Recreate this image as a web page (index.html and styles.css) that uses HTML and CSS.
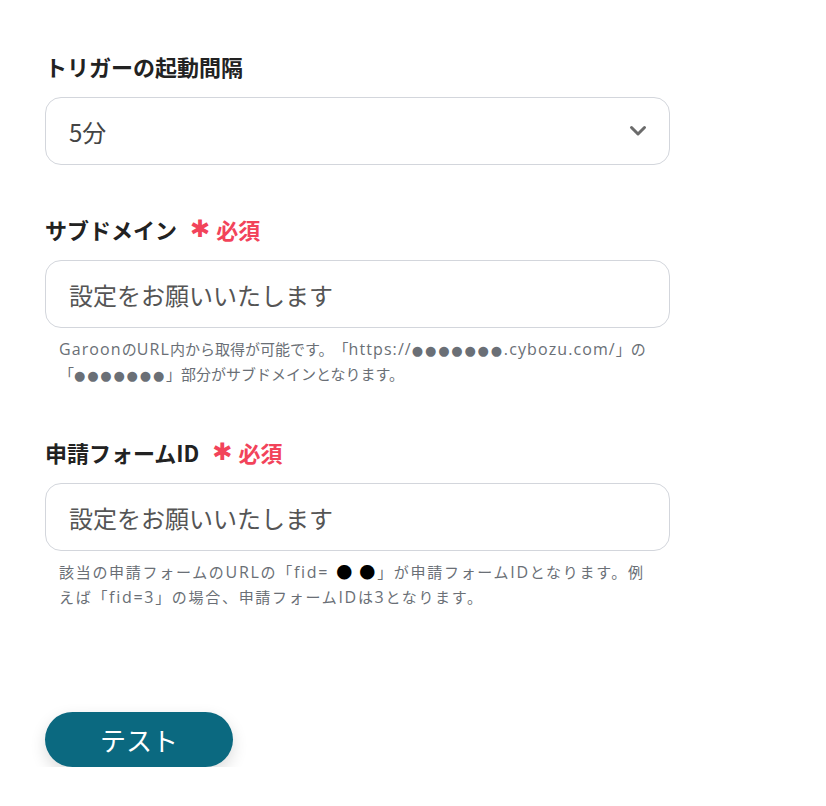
FILE: index.html
```html
<!DOCTYPE html>
<html lang="ja">
<head>
<meta charset="utf-8">
<link rel="stylesheet" href="styles.css">
</head>
<body>
<main class="form">
  <section class="field">
    <div class="label">トリガーの起動間隔</div>
    <div class="box select">
      <span class="value">5分</span>
      <svg class="chev" width="18" height="12" viewBox="0 0 18 12"><path d="M2.5 2.5 L9 9 L15.5 2.5" fill="none" stroke="#6b6b6b" stroke-width="3" stroke-linecap="round" stroke-linejoin="round"/></svg>
    </div>
  </section>
  <section class="field">
    <div class="label">サブドメイン<span class="req"><span class="ast">✱</span>必須</span></div>
    <div class="box"><span class="ph">設定をお願いいたします</span></div>
    <p class="help"><span class="lat">Garoon</span>の<span class="lat">URL</span>内から取得が可能です。「<span class="lat">https://<span class="dot">●●●●●●●</span>.cybozu.com/</span>」の「<span class="dot">●●●●●●●</span>」部分がサブドメインとなります。</p>
  </section>
  <section class="field">
    <div class="label">申請フォームID<span class="req"><span class="ast">✱</span>必須</span></div>
    <div class="box"><span class="ph">設定をお願いいたします</span></div>
    <p class="help help2">該当の申請フォームの<span class="lat">URL</span>の「<span class="lat">fid=</span><span class="big">●</span><span class="big last">●</span>」が申請フォーム<span class="lat">ID</span>となります。例<br>えば「<span class="lat">fid=3</span>」の場合、申請フォーム<span class="lat">ID</span>は<span class="lat">3</span>となります。</p>
  </section>
  <button class="test">テスト</button>
</main>
</body>
</html>
```
FILE: styles.css
```css
* { box-sizing: border-box; }
html, body { margin: 0; padding: 0; background: #fff; }
body {
  font-family: "Noto Sans CJK JP", "Noto Sans", sans-serif;
  color: #222;
  text-spacing-trim: space-all;
}
.form {
  width: 670px;
  padding: 51px 0 0 45px;
  display: flex;
  flex-direction: column;
}
.field { display: flex; flex-direction: column; width: 625px; }
.field:nth-child(1) { margin-bottom: 49px; }
.field:nth-child(2) { margin-bottom: 51px; }
.label {
  font-size: 22px;
  font-weight: 700;
  line-height: 30px;
  margin-bottom: 16px;
  color: #222;
  display: flex;
  align-items: center;
}
.req { color: #f2435a; margin-left: 13px; display: inline-flex; align-items: center; }
.ast {
  font-family: "DejaVu Sans", sans-serif;
  font-size: 24px;
  font-weight: 700;
  margin-right: 6px;
  line-height: 1;
}
.box {
  height: 68px;
  border: 1px solid #d3d6dc;
  border-radius: 16px;
  display: flex;
  align-items: center;
  padding: 0 23px;
  font-size: 24px;
}
.select { justify-content: space-between; padding-right: 22px; }
.value { color: #444; }
.ph { color: #555; }
.help {
  margin: 8px 0 0;
  padding-left: 14px;
  font-size: 15px;
  line-height: 25px;
  color: #6a6f76;
}
.help span { line-height: 1; }
.lat {
  font-family: "Open Sans", sans-serif;
  font-size: 16px;
  letter-spacing: 1.1px;
}
.dot {
  font-family: "DejaVu Sans", sans-serif;
  font-size: 13px;
  letter-spacing: 1.8px;
}
.help2 { letter-spacing: 1.7px; }
.help2 .lat { letter-spacing: 1.7px; }
.big {
  font-family: "Noto Sans CJK JP", sans-serif;
  font-size: 16px;
  color: #000;
  letter-spacing: 0;
  margin-left: 7px;
}
.big.last { margin-right: 2px; }
.test {
  margin-top: 103px;
  width: 188px;
  height: 55px;
  border: none;
  border-radius: 28px;
  background: #0b6980;
  color: #fff;
  font-family: "Noto Sans CJK JP", sans-serif;
  font-size: 26px;
  box-shadow: 0 6px 16px rgba(0, 0, 0, 0.14);
  padding: 0;
}
```
